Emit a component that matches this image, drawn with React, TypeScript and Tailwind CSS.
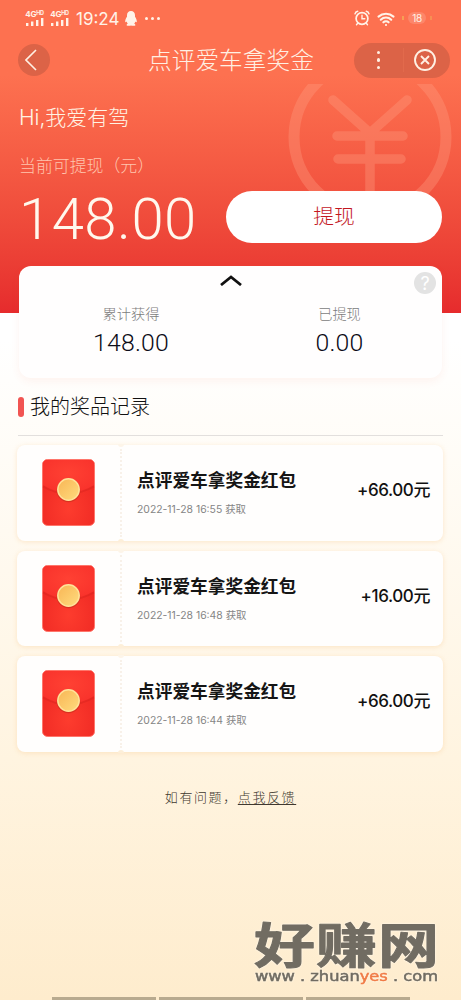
import { Wifi } from "lucide-react";

interface RewardRecord {
  title: string;
  time: string;
  amount: string;
}

const records: RewardRecord[] = [
  { title: "点评爱车拿奖金红包", time: "2022-11-28 16:55 获取", amount: "+66.00元" },
  { title: "点评爱车拿奖金红包", time: "2022-11-28 16:48 获取", amount: "+16.00元" },
  { title: "点评爱车拿奖金红包", time: "2022-11-28 16:44 获取", amount: "+66.00元" },
];

function Signal() {
  return (
    <div className="flex w-[19px] flex-col items-center">
      <div className="flex items-start text-[8px] leading-[8px] font-bold tracking-[-0.3px]">
        4G<span className="text-[5.5px] leading-[6px]">HD</span>
      </div>
      <svg width="19" height="8" viewBox="0 0 19 8" fill="currentColor">
        <rect x="1" y="5" width="2.4" height="3" />
        <rect x="6" y="3.5" width="2.4" height="4.5" />
        <rect x="11" y="2" width="2.4" height="6" />
        <rect x="16" y="0" width="2.4" height="8" />
      </svg>
    </div>
  );
}

function StatusBar() {
  return (
    <div className="flex h-9 items-center pl-[25px] text-[#fff3e8]">
      <div className="flex gap-[6px]">
        <Signal />
        <Signal />
      </div>
      <span className="mt-[2px] ml-[7px] w-[43px] text-[17px] leading-9 whitespace-nowrap">19:24</span>
      <svg className="ml-[6px]" width="12" height="15" viewBox="0 0 12 15" fill="currentColor">
        <path d="M6 0C3.5 0 2 1.700 2 4.200v1.600C1 7.200.200 9 .200 10.500c0 1 .7.900 1.400.1.300.900.700 1.500 1.200 2-.8.400-1.200.900-1.200 1.300 0 1 3.200 1.100 4.400.6 1.200.500 4.400.400 4.400-.6 0-.4-.4-.9-1.200-1.300.5-.5.900-1.100 1.200-2 .7.800 1.400.9 1.400-.1 0-1.500-.8-3.300-1.800-4.700V4.200C10 1.700 8.500 0 6 0z" />
      </svg>
      <div className="ml-2 flex gap-[3px]">
        <i className="size-[3px] rounded-full bg-current" />
        <i className="size-[3px] rounded-full bg-current" />
        <i className="size-[3px] rounded-full bg-current" />
      </div>
      <svg className="ml-auto" width="16" height="16" viewBox="0 0 16 16" fill="none" stroke="currentColor" strokeLinecap="round">
        <circle cx="8" cy="8.500" r="5.900" strokeWidth="1.700" />
        <path d="M8 5.200v3.500h2.800M3.500 13.500l-1 1.200M12.500 13.500l1 1.200" strokeWidth="1.400" />
        <path d="M1 3.800Q1.500 1.700 3.700 1.300M15 3.800Q14.500 1.700 12.300 1.300" strokeWidth="1.500" />
      </svg>
      <Wifi className="mt-px ml-[7px]" size={18} strokeWidth={2.8} />
      <div className="ml-[7px] flex w-[30px] items-center justify-between text-[10px]">
        <i className="h-1 w-[2px] bg-[#f4b455]/70" />
        <span className="rounded-full bg-white/15 px-1 leading-3 tracking-[-0.5px]">18</span>
        <i className="h-1 w-[2px] bg-[#f4a455]/60" />
      </div>
      <div className="w-[29px]" />
    </div>
  );
}

function NavBar() {
  return (
    <div className="flex h-12 items-center pr-[11px] pl-[18px] text-[#fff0e3]">
      <div className="flex size-8 items-center justify-center rounded-full bg-[#dc6347]">
        <svg className="mr-[7px]" width="12" height="22" viewBox="0 0 12 22" fill="none" stroke="currentColor" strokeWidth="1.6">
          <path d="M11 1 1 11l10 10" />
        </svg>
      </div>
      <h1 className="mt-px ml-[98px] text-[23.7px] leading-none font-light whitespace-nowrap">点评爱车拿奖金</h1>
      <div className="ml-auto flex h-[35px] w-[96px] items-center rounded-full bg-[#dc6347]">
        <div className="flex w-[49px] flex-col items-center gap-[4px]">
          <i className="size-[3.5px] rounded-full bg-current" />
          <i className="size-[3.5px] rounded-full bg-current" />
          <i className="size-[3.5px] rounded-full bg-current" />
        </div>
        <div className="h-6 w-px bg-[#e26a4c]" />
        <svg className="ml-[9px]" width="24" height="24" viewBox="0 0 24 24" fill="none" stroke="currentColor" strokeWidth="1.9">
          <circle cx="12" cy="12" r="10" />
          <path d="m8 8 8 8M16 8l-8 8" />
        </svg>
      </div>
    </div>
  );
}

// Faint yen coin behind the withdraw button, cut off flat at the top
function YenMark() {
  return (
    <svg className="absolute top-[84px] left-[284px]" width="172" height="150" viewBox="0 0 172 150" fill="none">
      <g stroke="#ff9c80" opacity="0.36">
        <circle cx="86" cy="53" r="76" strokeWidth="11" />
        <path d="M49 16 86 49 123 16M53 52H119M54 75H117M86 49V120" strokeWidth="9.500" strokeLinecap="round" strokeLinejoin="round" />
      </g>
    </svg>
  );
}

interface StatProps {
  label: string;
  value: string;
}

function Stat({ label, value }: StatProps) {
  return (
    <div>
      <p className="mt-[18px] text-[14.2px] leading-5 font-light text-[#7c7c7c]">{label}</p>
      <p className="mt-[5px] font-['Roboto',sans-serif] text-[24.8px] leading-7 font-light tracking-[0.2px] text-[#0c0c18]">{value}</p>
    </div>
  );
}

function StatsCard() {
  return (
    <div className="relative mx-[19px] mt-[23px] h-[112px] rounded-[12px] bg-[#fffefe] shadow-[0_3px_9px_rgba(240,80,60,0.07)]">
      <svg className="mx-auto block pt-[9px]" width="22" height="20" viewBox="0 0 22 11" fill="none" stroke="#111" strokeWidth="2.800">
        <path d="M1 10 11 2l10 8" />
      </svg>
      <div className="absolute top-[6px] right-[6px] flex size-[22px] items-center justify-center rounded-full bg-[#e3e3e3] text-[18px] text-white">?</div>
      <div className="grid grid-cols-2 pr-[6px] pl-[7px] text-center">
        <div className="pl-[5px]">
          <Stat label="累计获得" value="148.00" />
        </div>
        <div className="pl-[12px]">
          <Stat label="已提现" value="0.00" />
        </div>
      </div>
    </div>
  );
}

function RedPacket() {
  return (
    <svg width="53" height="67" viewBox="0 0 53 67">
      <defs>
        <radialGradient id="packet" cx="0.5" cy="0.75" r="0.6">
          <stop offset="0" stopColor="#fd3c2e" />
          <stop offset="1" stopColor="#f02a24" />
        </radialGradient>
        <radialGradient id="flap" cx="0.5" cy="0.4" r="0.6">
          <stop offset="0" stopColor="#ff4133" />
          <stop offset="1" stopColor="#f9332c" />
        </radialGradient>
        <linearGradient id="coin" x1="0" y1="0" x2="1" y2="1">
          <stop offset="0" stopColor="#f8b555" />
          <stop offset="1" stopColor="#ffdc7e" />
        </linearGradient>
      </defs>
      <rect x="0.500" y="0.500" width="52" height="66" rx="5" fill="url(#packet)" stroke="#ff766b" />
      <path d="M1 27.500Q26 42 52 27.500" fill="none" stroke="#c91f19" strokeOpacity="0.3" strokeWidth="2" />
      <path d="M1 6Q1 1 6 1H47Q52 1 52 6V26Q26 41 1 26Z" fill="url(#flap)" />
      <circle cx="26.500" cy="31.500" r="11.800" fill="#a92712" fillOpacity="0.4" />
      <circle cx="26.500" cy="30.500" r="10.700" fill="url(#coin)" stroke="#ffe298" strokeWidth="1.500" />
    </svg>
  );
}

function RecordCard({ title, time, amount }: RewardRecord) {
  return (
    <div className="relative flex h-[95.5px] rounded-[8px] bg-[#fffefd] shadow-[0_1px_5px_rgba(245,185,110,0.3)]">
      <div className="flex w-[104px] items-center justify-center pr-[2px]">
        <RedPacket />
      </div>
      <div className="pt-[24px] pl-[16px]">
        <p className="text-[17.7px] leading-6 font-bold whitespace-nowrap text-[#151515]">{title}</p>
        <p className="mt-[9px] text-[10.4px] leading-4 whitespace-nowrap text-[#858585]">{time}</p>
      </div>
      <p className="mt-[33px] mr-[13px] ml-auto text-[17px] leading-6 font-medium tracking-[-0.4px] whitespace-nowrap text-[#111]">{amount}</p>
      <i className="absolute inset-y-1 left-[103px] border-r-2 border-dotted border-[#f8f1e9]" />
      <i className="absolute -top-px left-[101px] h-[3px] w-[6px] rounded-b-full bg-[#fdf5e9]" />
      <i className="absolute -bottom-px left-[101px] h-[3px] w-[6px] rounded-t-full bg-[#fdefd9]" />
    </div>
  );
}

function Watermark() {
  return (
    <svg className="absolute top-[905px] left-[250px] overflow-visible drop-shadow-[0_0_1px_#fffaf0]" width="195" height="90" viewBox="0 0 195 90" fill="#716c62">
      <text
        className="font-['Noto_Sans_CJK_SC',sans-serif] font-bold"
        transform="translate(4 58) scale(1 0.79)"
        fontSize="61"
        textLength="185"
        stroke="#716c62"
        strokeWidth="1.200"
        strokeLinejoin="round"
      >
        好赚网
      </text>
      <text className="font-['DejaVu_Sans',sans-serif]" x="5" y="76" fontSize="13.500" textLength="183" lengthAdjust="spacingAndGlyphs" stroke="#716c62" strokeWidth="0.500">
        www . zhuan<tspan fill="#f07a45" stroke="#f07a45">yes</tspan> . com
      </text>
    </svg>
  );
}

export default function App() {
  return (
    <div className="relative h-[1000px] w-[461px] overflow-hidden bg-linear-to-b from-white from-[34%] via-[#fff4e0] via-[76%] to-[#feeccd] font-['Inter','Noto_Sans_CJK_SC',sans-serif]">
      <div className="absolute inset-x-0 top-0 h-[313px] bg-linear-to-b from-[#fd7150] from-[24%] to-[#e62b2d]" />
      <YenMark />
      <div className="relative">
        <StatusBar />
        <NavBar />
        <div className="px-[19px] text-[#fff3e4]">
          <p className="mt-[19px] text-[21px] leading-[30px] font-light">Hi,我爱有驾</p>
          <p className="mt-[21px] text-[16.9px] leading-6 font-light text-[#ffc4ad]">当前可提现（元）</p>
          <div className="mt-[13px] flex items-center justify-between">
            <span className="pt-[4px] font-['Roboto',sans-serif] text-[58px] leading-[48px] font-light tracking-[0.5px] text-[#fff8ed]">148.00</span>
            <button className="h-[52px] w-[216px] rounded-full bg-white text-[20.8px] font-light text-[#c3171f]">提现</button>
          </div>
        </div>
        <StatsCard />
        <div className="mx-[18px] mt-[14px] flex h-[30px] items-center">
          <i className="h-5 w-[6px] rounded-full bg-[#f15452]" />
          <h2 className="ml-[6px] text-[20px] font-light text-[#111]">我的奖品记录</h2>
        </div>
        <div className="mx-[18px] mt-[13px] h-px bg-[#e2dfdd]" />
        <div className="mt-[9px] mr-[18px] ml-[17px] flex flex-col gap-[10px]">
          {records.map((r) => (
            <RecordCard key={r.time} {...r} />
          ))}
        </div>
        <p className="mt-[35px] text-center text-[13px] leading-5 font-light tracking-[1.6px] text-[#40382f]">
          如有问题，<span className="underline underline-offset-2">点我反馈</span>
        </p>
      </div>
      <Watermark />
      <div className="absolute top-[997px] left-[52px] flex gap-[3px]">
        <i className="h-[3px] w-[104px] bg-[#b8aa8f]" />
        <i className="h-[3px] w-[144px] bg-[#b8aa8f]" />
        <i className="h-[3px] w-[104px] bg-[#b8aa8f]" />
      </div>
    </div>
  );
}
